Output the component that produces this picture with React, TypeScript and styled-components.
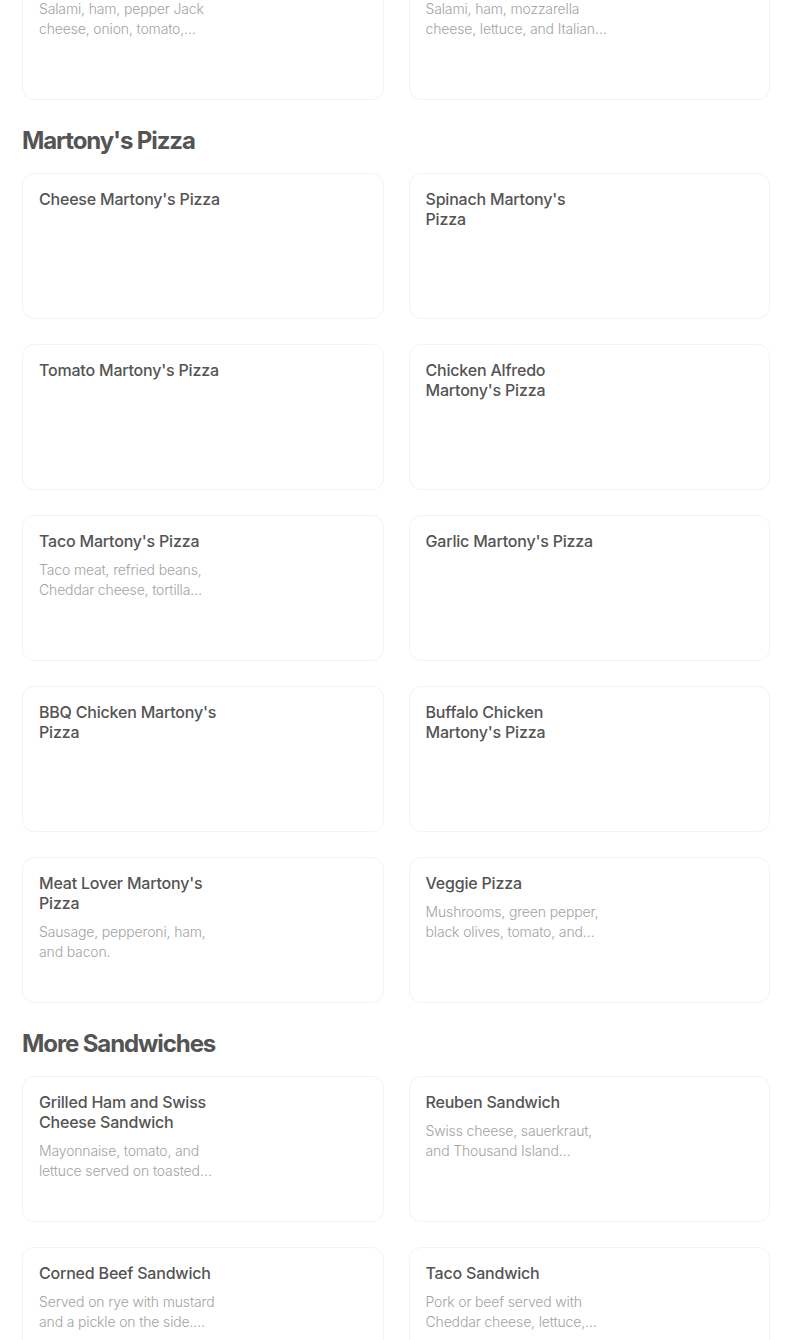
import styled, { createGlobalStyle } from 'styled-components'

const GlobalStyle = createGlobalStyle`
  body {
    margin: 0;
    background: #fff;
    font-family: Inter, "Liberation Sans", sans-serif;
  }
`

const Page = styled.div`
  width: 748px;
  padding: 0 22px;
`

const Section = styled.section`
  &:first-child {
    margin-top: -46px;
  }
`

const Heading = styled.h2`
  margin: 25px 0 16px;
  font-family: Inter, "Liberation Sans", sans-serif;
  font-size: 24px;
  line-height: 32px;
  font-weight: 700;
  letter-spacing: -1.1px;
  color: #545454;
`

const Grid = styled.div`
  display: grid;
  grid-template-columns: 1fr 1fr;
  gap: 25px;
`

const Card = styled.div`
  height: 146px;
  box-sizing: border-box;
  padding: 15px 16px;
  border: 1px solid #f3f3f3;
  border-radius: 12px;
  background: #fff;
`

const Text = styled.div`
  max-width: 186px;
`

const Title = styled.div`
  max-width: 184px;
  font-size: 16px;
  line-height: 20px;
  font-weight: 500;
  letter-spacing: -0.2px;
  color: #545454;
`

const Description = styled.div`
  margin-top: 9px;
  font-size: 14px;
  line-height: 20px;
  font-weight: 300;
  letter-spacing: -0.15px;
  color: #a3a3a3;
  display: -webkit-box;
  -webkit-line-clamp: 2;
  -webkit-box-orient: vertical;
  overflow: hidden;
`

type Item = { title: string; description?: string }

const sections: { name?: string; items: Item[] }[] = [
  {
    items: [
      { title: 'Italian Sub', description: 'Salami, ham, pepper Jack cheese, onion, tomato, lettuce, and Italian dressing.' },
      { title: 'Club Sub', description: 'Salami, ham, mozzarella cheese, lettuce, and Italian dressing.' },
    ],
  },
  {
    name: "Martony's Pizza",
    items: [
      { title: "Cheese Martony's Pizza" },
      { title: "Spinach Martony's Pizza" },
      { title: "Tomato Martony's Pizza" },
      { title: "Chicken Alfredo Martony's Pizza" },
      { title: "Taco Martony's Pizza", description: 'Taco meat, refried beans, Cheddar cheese, tortilla chips, lettuce, and tomato.' },
      { title: "Garlic Martony's Pizza" },
      { title: "BBQ Chicken Martony's Pizza" },
      { title: "Buffalo Chicken Martony's Pizza" },
      { title: "Meat Lover Martony's Pizza", description: 'Sausage, pepperoni, ham, and bacon.' },
      { title: 'Veggie Pizza', description: 'Mushrooms, green pepper, black olives, tomato, and onion.' },
    ],
  },
  {
    name: 'More Sandwiches',
    items: [
      { title: 'Grilled Ham and Swiss Cheese Sandwich', description: 'Mayonnaise, tomato, and lettuce served on toasted bread.' },
      { title: 'Reuben Sandwich', description: 'Swiss cheese, sauerkraut, and Thousand Island dressing on rye.' },
      { title: 'Corned Beef Sandwich', description: 'Served on rye with mustard and a pickle on the side. Substitutions available.' },
      { title: 'Taco Sandwich', description: 'Pork or beef served with Cheddar cheese, lettuce, tomato, and taco sauce.' },
    ],
  },
]

const App = () => {
  return (
    <>
      <GlobalStyle />
      <Page>
        {sections.map((section, i) => (
          <Section key={i}>
            {section.name && <Heading>{section.name}</Heading>}
            <Grid>
              {section.items.map((item) => (
                <Card key={item.title}>
                  <Text>
                    <Title>{item.title}</Title>
                    {item.description && <Description>{item.description}</Description>}
                  </Text>
                </Card>
              ))}
            </Grid>
          </Section>
        ))}
      </Page>
    </>
  )
}

export default App
